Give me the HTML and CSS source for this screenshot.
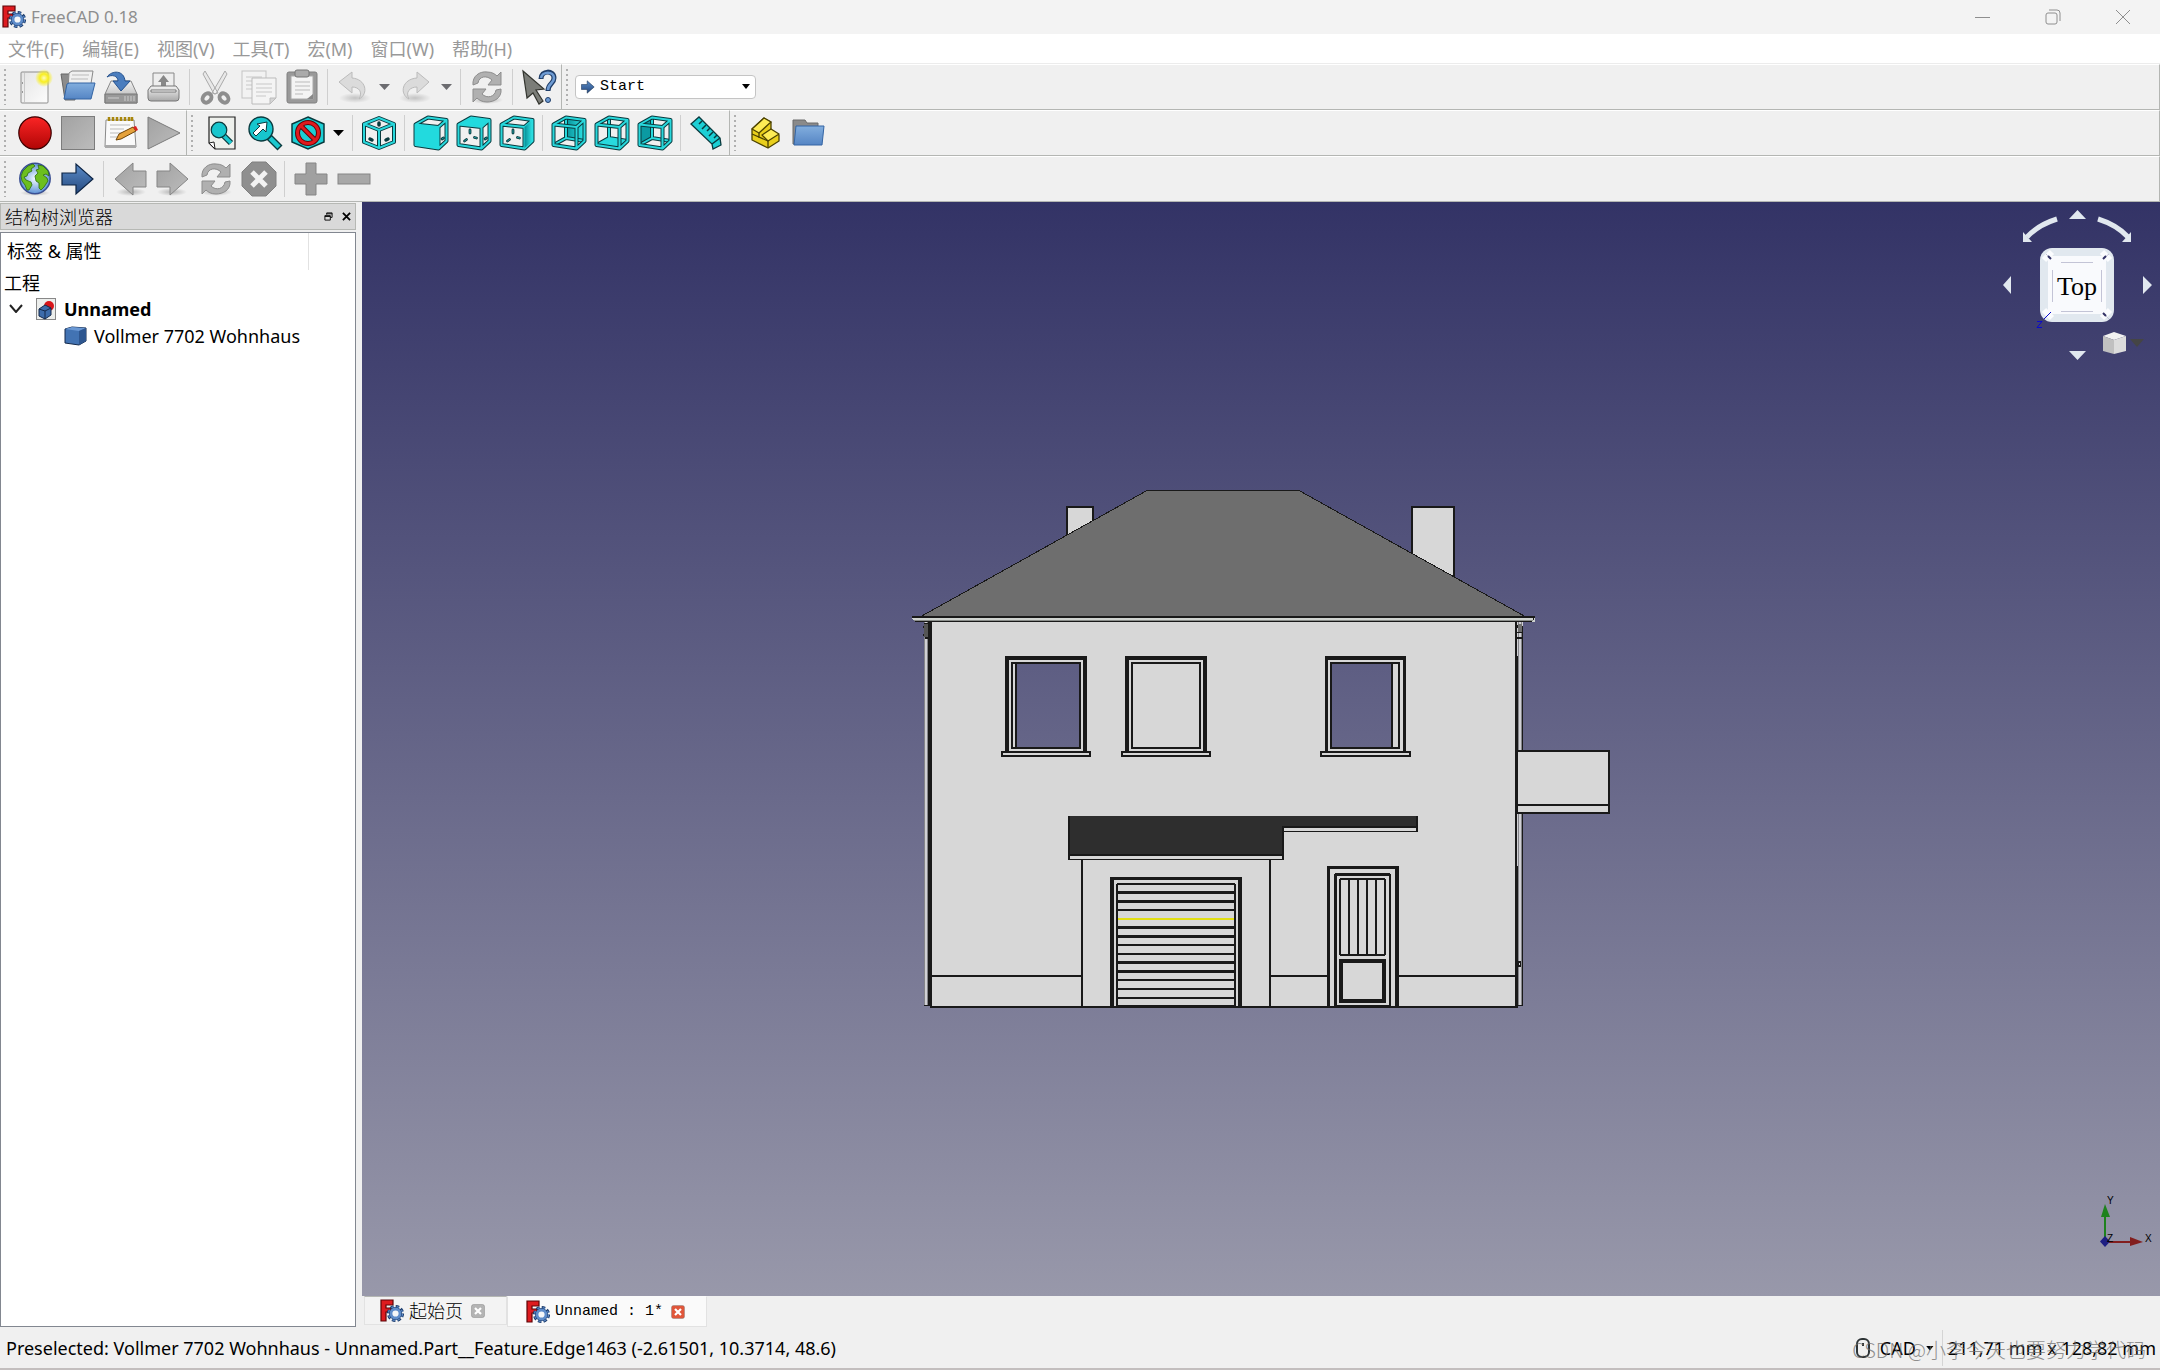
FILE: index.html
```html
<!DOCTYPE html>
<html lang="zh-CN">
<head>
<meta charset="utf-8">
<title>FreeCAD 0.18</title>
<link rel="stylesheet" href="styles.css">
</head>
<body>
<svg class="defs" aria-hidden="true">
  <defs>
    <linearGradient id="paper" x1="0" y1="0" x2="1" y2="1"><stop offset="0" stop-color="#e4e4e4"/><stop offset="1" stop-color="#fcfcfc"/></linearGradient>
    <linearGradient id="metal" x1="0" y1="0" x2="0" y2="1"><stop offset="0" stop-color="#f4f4f4"/><stop offset="1" stop-color="#a8a8a8"/></linearGradient>
    <linearGradient id="gray" x1="0" y1="0" x2="1" y2="1"><stop offset="0" stop-color="#a2a2a2"/><stop offset="1" stop-color="#bcbcbc"/></linearGradient>
    <linearGradient id="blue" x1="0" y1="0" x2="0" y2="1"><stop offset="0" stop-color="#82aede"/><stop offset="1" stop-color="#5585c4"/></linearGradient>
    <linearGradient id="deep" x1="0" y1="0" x2="0" y2="1"><stop offset="0" stop-color="#5b8cc8"/><stop offset="1" stop-color="#25497f"/></linearGradient>
    <linearGradient id="red" x1="0" y1="0" x2="0" y2="1"><stop offset="0" stop-color="#fb2525"/><stop offset="1" stop-color="#b00505"/></linearGradient>
    <linearGradient id="teal" x1="0" y1="0" x2="1" y2="0"><stop offset="0" stop-color="#078f97"/><stop offset="1" stop-color="#2fe3e6"/></linearGradient>
    <radialGradient id="glow"><stop offset="0" stop-color="#fffbc0"/><stop offset=".45" stop-color="#f8ee20"/><stop offset="1" stop-color="#f8ee20" stop-opacity="0"/></radialGradient>
    <radialGradient id="shade"><stop offset="0" stop-color="#000" stop-opacity=".25"/><stop offset="1" stop-color="#000" stop-opacity="0"/></radialGradient>
    <radialGradient id="sea"><stop offset="0" stop-color="#f2faff"/><stop offset="1" stop-color="#5f93d6"/></radialGradient>
    <symbol id="logo" viewBox="0 0 24 24">
      <path d="M1 1H13V6H6V9H11V13H6V22H1Z" fill="#de1b1f" stroke="#5d0508" stroke-width="1.2"/>
      <circle cx="15.5" cy="14.500" r="6.600" fill="none" stroke="#1c3c6c" stroke-width="4" stroke-dasharray="3.200 1.984"/>
      <circle cx="15.500" cy="14.500" r="6.300" fill="none" stroke="#5e8cca" stroke-width="2.600" stroke-dasharray="2.300 2.648" stroke-dashoffset="-.4"/>
      <circle cx="15.500" cy="14.500" r="4.500" fill="#f4f6f8" stroke="#1c3c6c" stroke-width="4"/>
      <circle cx="15.500" cy="14.500" r="4.500" fill="#f4f6f8" stroke="#5e8cca" stroke-width="2.800"/>
    </symbol>
    <path id="frame" d="M1.500 8.500L24.500 11V32.500L1.500 29ZM1.500 8.500L14 1.500L32.500 4L24.500 11M32.500 4V25L24.500 32.500" fill="none" stroke-linejoin="round"/>
    <path id="back" d="M14 1.500V22L1.500 29M14 22L32.500 25" fill="none"/>
    <path id="ticks" d="M13 14V17M7.500 25L9.500 23.500M17.500 21.500L19.500 22M28 23L29.500 22" fill="none" stroke-linecap="round"/>
    <g id="box"><use href="#frame" stroke="#0a3a3e" stroke-width="4"/><use href="#frame" stroke="#28d8dc" stroke-width="2"/></g>
    <g id="rear"><use href="#back" stroke="#0a3a3e" stroke-width="4"/><use href="#back" stroke="#28d8dc" stroke-width="2"/></g>
    <g id="dots"><use href="#ticks" stroke="#0a3a3e" stroke-width="2.800"/><use href="#ticks" stroke="#28b8bc" stroke-width=".8"/></g>
    <symbol id="cycle" viewBox="0 0 34 34">
      <ellipse cx="17" cy="30" rx="16" ry="4" fill="url(#shade)"/>
      <path d="M3 15C2 6 10 1 17 2C22 2 25 4 27 6L31 2V15H18L22 10C17 5 9 6 8 13ZM31 19C32 28 24 32 17 32C12 32 9 30 7 28L3 32V19H16L12 24C17 29 25 27 26 20Z" fill="#b0b0b0" stroke="#8d8d8d"/>
    </symbol>
    <symbol id="gohere" viewBox="0 0 34 34"><path d="M1 11H15V2L32 17L15 32V23H1Z" fill="url(#deep)" stroke="#0d2444" stroke-width="1.200"/></symbol>
    <symbol id="shut" viewBox="0 0 14 14"><rect x=".5" y=".5" width="13" height="13" rx="2" fill="currentColor" stroke="#777" stroke-opacity=".4"/><path d="M4 4L10 10M10 4L4 10" stroke="#fff" stroke-width="2.200"/></symbol>
  </defs>
</svg>

<div class="app">
  <header class="titlebar">
    <svg class="logo"><use href="#logo"/></svg>
    <h1>FreeCAD 0.18</h1>
    <div class="winbtns">
      <button aria-label="最小化"><svg viewBox="0 0 16 16"><path d="M0 8.500H15"/></svg></button>
      <button aria-label="还原"><svg viewBox="0 0 16 16"><rect x="1" y="4" width="11" height="11" rx="2"/><path d="M4 1H12Q15 1 15 4V12"/></svg></button>
      <button aria-label="关闭"><svg viewBox="0 0 16 16"><path d="M1 1L15 15M15 1L1 15"/></svg></button>
    </div>
  </header>

  <nav class="menubar">
    <button>文件(F)</button><button>编辑(E)</button><button>视图(V)</button><button>工具(T)</button><button>宏(M)</button><button>窗口(W)</button><button>帮助(H)</button>
  </nav>

  <div class="toolrow">
    <div class="toolbar">
      <button class="tool" aria-label="新建"><svg viewBox="0 0 34 34"><rect x="3" y="2" width="27" height="31" rx="1" fill="url(#paper)" stroke="#8e8e8e"/><path d="M6.500 3V32" stroke="#c8c8c8"/><path d="M4.500 12V14M4.500 21V23" stroke="#999"/><circle cx="26" cy="8" r="9" fill="url(#glow)"/></svg></button>
      <button class="tool" aria-label="打开"><svg viewBox="0 0 34 34"><path d="M0 4H12L14 7V30H4Z" fill="#8c8c8c" stroke="#666"/><path d="M8 3L11 1H32L29 20H7Z" fill="#f0f0f0" stroke="#888"/><path d="M11 5H28M10 9H27" stroke="#bbb"/><path d="M8 13H34L30 29H3L6 14Z" fill="url(#blue)" stroke="#3465a4"/></svg></button>
      <button class="tool" aria-label="保存"><svg viewBox="0 0 34 34"><path d="M7 11H27L33 24V33H1V24Z" fill="url(#metal)" stroke="#888"/><path d="M1 24H33V33H1Z" fill="#999" stroke="#777"/><path d="M21 26V31M24 26V31M27 26V31M30 26V31M4 28H15" stroke="#ccc"/><path d="M3 7C8 0 20 0 21 11H26L17 21L9 11H14C14 6 8 4 3 7Z" fill="#4a7dbe" stroke="#23508d"/></svg></button>
      <button class="tool" aria-label="打印"><svg viewBox="0 0 34 34"><path d="M6 3H27V20H6Z" fill="#eee" stroke="#888"/><path d="M16.500 5L22 12H19V17H14V12H11Z" fill="#888"/><path d="M4 16H29L32 20V28Q32 31 29 31H4Q1 31 1 28V20Z" fill="url(#metal)" stroke="#777"/><path d="M4 20H29V22H4Z" fill="#fff" stroke="#777"/></svg></button>
      <i class="sep"></i>
      <button class="tool" aria-label="剪切"><svg viewBox="0 0 34 34"><path d="M6 1L19 23L15 24L4 4ZM26 1L13 23L17 24L28 4Z" fill="#e8e8e8" stroke="#aaa"/><g fill="none" stroke="#8e8e8e" stroke-width="4"><ellipse cx="8" cy="28" rx="4" ry="5" transform="rotate(40 8 28)"/><ellipse cx="25" cy="28" rx="4" ry="5" transform="rotate(-40 25 28)"/></g></svg></button>
      <button class="tool faint" aria-label="复制"><svg viewBox="0 0 34 34"><rect x="0" y="1" width="24" height="27" fill="#f3f3f3" stroke="#b5b5b5"/><path d="M4 7H20M4 11H10M4 15H10M4 19H10" stroke="#bbb"/><path d="M10 8H34V28L28 34H10Z" fill="#f6f6f6" stroke="#aaa"/><path d="M14 14H30M14 18H30M14 22H30M14 26H24" stroke="#bbb"/><path d="M34 28H28V34Z" fill="#ccc" stroke="#aaa"/></svg></button>
      <button class="tool" aria-label="粘贴"><svg viewBox="0 0 34 34"><rect x="2" y="2" width="30" height="31" rx="2" fill="#999" stroke="#808080"/><path d="M6 6H28V29H6Z" fill="#f4f4f4" stroke="#aaa"/><rect x="10" y="0" width="14" height="7" rx="2" fill="#aaa" stroke="#777"/><path d="M10 12H25M10 16H25M10 20H25M10 24H18" stroke="#bbb"/><path d="M28 24L22 29H28Z" fill="#888"/></svg></button>
      <i class="sep"></i>
      <button class="tool faint" aria-label="撤销"><svg viewBox="0 0 34 34"><ellipse cx="18" cy="28" rx="16" ry="5" fill="url(#shade)"/><path d="M2 12L15 2V8C29 9 32 24 22 29C26 22 22 17 15 17V23Z" fill="#d4d4d4" stroke="#aaa"/></svg></button>
      <button class="drop dim" aria-label="撤销列表"></button>
      <button class="tool faint" aria-label="重做"><svg viewBox="0 0 34 34"><ellipse cx="16" cy="28" rx="16" ry="5" fill="url(#shade)"/><path d="M30 12L18 2V8C3 9 0 24 10 29C6 22 11 17 18 17V23Z" fill="#d4d4d4" stroke="#aaa"/></svg></button>
      <button class="drop dim" aria-label="重做列表"></button>
      <i class="sep"></i>
      <button class="tool" aria-label="刷新"><svg><use href="#cycle"/></svg></button>
      <i class="sep"></i>
      <button class="tool" aria-label="这是什么"><svg viewBox="0 0 34 34"><path d="M1 1L22 19L14 20L21 31L17 34L11 23L5 28Z" fill="#7b7d78" stroke="#33352f" stroke-width="1.200"/><path d="M19 9C19 0 32 0 32 8C32 14 26 13 26 21" fill="none" stroke="#1f3d68" stroke-width="5"/><path d="M19 8C20 1 32 1 32 8C32 14 26 13 26 20" fill="none" stroke="#6e9bd3" stroke-width="2.600"/><circle cx="26" cy="30" r="2.500" fill="#6e9bd3" stroke="#1f3d68"/></svg></button>
    </div>
    <div class="toolbar last">
      <div class="combo">
        <svg class="comboicon"><use href="#gohere"/></svg>
        <select aria-label="工作台"><option>Start</option></select>
      </div>
    </div>
  </div>

  <div class="toolrow">
    <div class="toolbar">
      <button class="tool" aria-label="录制宏"><svg viewBox="0 0 34 34"><circle cx="17" cy="17" r="16.200" fill="url(#red)" stroke="#3b0000" stroke-width="1.200"/></svg></button>
      <button class="tool" aria-label="停止录制"><svg viewBox="0 0 34 34"><rect x=".5" y=".5" width="33" height="33" fill="url(#gray)" stroke="#7c7c7c"/></svg></button>
      <button class="tool" aria-label="宏管理"><svg viewBox="0 0 34 34"><path d="M2 4H30L32 31H1Z" fill="#fafafa" stroke="#8a8a8a"/><path d="M1 29H32V32H1Z" fill="#aaa"/><path d="M5 1V5M9 1V5M13 1V5M17 1V5M21 1V5M25 1V5M28 1V5" stroke="#a8860c" stroke-width="2.500"/><path d="M6 9H26M6 13H20M6 17H18M6 21H13" stroke="#bbb"/><path d="M12 24L15 18L29 11L32 15L17 23Z" fill="#e5a23c" stroke="#6e4306"/><path d="M29 11L32 10L34 14L32 15Z" fill="#d22"/></svg></button>
      <button class="tool" aria-label="执行宏"><svg viewBox="0 0 34 34"><path d="M1 1L33 17L1 33Z" fill="url(#gray)" stroke="#7c7c7c"/></svg></button>
    </div>
    <div class="toolbar">
      <button class="tool" aria-label="显示全部"><svg viewBox="0 0 34 34"><path d="M4 1H30V33H10L4 27Z" fill="#eef0ec" stroke="#222" stroke-width="1.200"/><path d="M4 27L10 33L9 26Z" fill="#fff" stroke="#222"/><path d="M17 18L26 27" stroke="#0a3a3e" stroke-width="6"/><path d="M18 19L26 27" stroke="#1cc8cf" stroke-width="3.500"/><circle cx="14" cy="14" r="7.800" fill="#17c6cd" stroke="#0a3a3e" stroke-width="1.200"/></svg></button>
      <button class="tool" aria-label="显示选择"><svg viewBox="0 0 34 34"><path d="M21 21L32 32" stroke="#0a3a3e" stroke-width="7"/><path d="M22 22L31 31" stroke="#1cc8cf" stroke-width="4.500"/><circle cx="13" cy="13" r="12" fill="#17c6cd" stroke="#0a3a3e" stroke-width="1.400"/><path d="M19 6L18 16L15 13L8 20L5 17L12 10L9 8Z" fill="#fff" stroke="#0a3a3e"/></svg></button>
      <button class="tool" aria-label="显示样式"><svg viewBox="0 0 34 34"><path d="M17 1L33 8V26L17 33L1 26V8Z" fill="#1ccfd5" stroke="#0a3a3e" stroke-width="1.500"/><circle cx="17" cy="17" r="10.500" fill="none" stroke="#5d0508" stroke-width="5"/><path d="M10 10L24 24" stroke="#5d0508" stroke-width="5"/><circle cx="17" cy="17" r="10.500" fill="none" stroke="#e01a1e" stroke-width="3"/><path d="M10 10L24 24" stroke="#e01a1e" stroke-width="3"/></svg></button>
      <button class="drop" aria-label="显示样式列表"></button>
      <i class="sep"></i>
      <button class="tool" aria-label="轴测图"><svg viewBox="0 0 34 34"><g fill="none" stroke-linejoin="round"><path d="M17 2L32 8V26L17 32L2 26V8ZM2 8L17 14L32 8M17 14V32" stroke="#0a3a3e" stroke-width="4"/><path d="M17 2L32 8V26L17 32L2 26V8ZM2 8L17 14L32 8M17 14V32" stroke="#28d8dc" stroke-width="2"/><path d="M17 7V9M8 23L10 24M24 24L26 23" stroke="#0a3a3e" stroke-width="3.500" stroke-linecap="round"/></g></svg></button>
      <i class="sep"></i>
      <button class="tool" aria-label="前视图"><svg viewBox="0 0 34 34"><use href="#dots"/><use href="#box"/><path d="M1 8.500L25 11V33L1 29Z" fill="#22dade"/></svg></button>
      <button class="tool" aria-label="俯视图"><svg viewBox="0 0 34 34"><use href="#dots"/><use href="#box"/><path d="M2 8.500L14 2L32 4L24.500 10.500Z" fill="#22dade"/></svg></button>
      <button class="tool" aria-label="右视图"><svg viewBox="0 0 34 34"><use href="#dots"/><use href="#box"/><path d="M24.500 11L32.500 4V25L24.500 32Z" fill="url(#teal)"/></svg></button>
      <i class="sep"></i>
      <button class="tool" aria-label="后视图"><svg viewBox="0 0 34 34"><path d="M14 2L32 4V25L14 22Z" fill="url(#teal)"/><use href="#rear"/><use href="#box"/></svg></button>
      <button class="tool" aria-label="底视图"><svg viewBox="0 0 34 34"><use href="#rear"/><path d="M2 29L14 22L32 25L24 32Z" fill="#28dade"/><use href="#box"/></svg></button>
      <button class="tool" aria-label="左视图"><svg viewBox="0 0 34 34"><path d="M2 9L14 2V22L2 29Z" fill="#0b9aa2"/><use href="#rear"/><use href="#box"/></svg></button>
      <i class="sep"></i>
      <button class="tool" aria-label="测量距离"><svg viewBox="0 0 34 34"><path d="M1 8L9 1L30 22L31 29L23 33L22 28Z" fill="#1ccfd5" stroke="#0a3a3e" stroke-width="1.300"/><path d="M22 28L30 22M12 5L9 8M16 9L12 13M20 12L17 15M23 16L19 20M27 19L24 22" stroke="#0a3a3e" stroke-width="1.500"/></svg></button>
    </div>
    <div class="toolbar last">
      <button class="tool" aria-label="创建零件"><svg viewBox="0 0 34 34"><g stroke="#4d4300" stroke-width="1.300" stroke-linejoin="round"><path d="M4 13L16 2L23 6V14L31 19V25L20 32L4 24Z" fill="#e9cf1c"/><path d="M4 13L16 2L23 6L11 17Z" fill="#fdeb55"/><path d="M14 19L23 13L31 18L20 25Z" fill="#fdeb55"/><path d="M11 17V22M4 18L20 25V32" fill="none"/></g></svg></button>
      <button class="tool" aria-label="创建组"><svg viewBox="0 0 34 34"><path d="M2 4H14L16 7H27V28H2Z" fill="#8a8a8a" stroke="#6b6b6b"/><path d="M5 10H33L31 29H3Z" fill="url(#blue)" stroke="#3465a4"/></svg></button>
    </div>
  </div>

  <div class="toolrow">
    <div class="toolbar last">
      <button class="tool" aria-label="打开网站"><svg viewBox="0 0 34 34"><ellipse cx="17" cy="31" rx="15" ry="3" fill="url(#shade)"/><circle cx="17" cy="16.500" r="15.200" fill="url(#sea)" stroke="#3a4f92" stroke-width="1.500"/><path d="M3 14L5 9L10 4L15 2L17 4L13 7L14 9L10 11L9 14L6 15L8 18L13 20L14 23L11 28L9 28L7 23L4 19ZM20 3L25 4L30 9L31 14L28 12L25 13L29 16L30 19L26 25L23 28L21 26L21 21L18 19L17 14L20 11L18 8L21 7Z" fill="#6cbf1e" stroke="#2e6d0d" stroke-width=".8"/></svg></button>
      <button class="tool" aria-label="转到"><svg><use href="#gohere"/></svg></button>
      <i class="sep"></i>
      <button class="tool" aria-label="后退"><svg viewBox="0 0 34 34"><ellipse cx="18" cy="30" rx="15" ry="4" fill="url(#shade)"/><path d="M2 17L20 1V9H33V25H20V33Z" fill="url(#gray)" stroke="#858585"/></svg></button>
      <button class="tool" aria-label="前进"><svg viewBox="0 0 34 34"><ellipse cx="16" cy="30" rx="15" ry="4" fill="url(#shade)"/><path d="M32 17L14 1V9H1V25H14V33Z" fill="url(#gray)" stroke="#858585"/></svg></button>
      <button class="tool" aria-label="重新载入"><svg><use href="#cycle"/></svg></button>
      <button class="tool" aria-label="停止"><svg viewBox="0 0 34 34"><path d="M10 0H24L34 10V24L24 34H10L0 24V10Z" fill="#8f8f8f" stroke="#808080"/><path d="M10 10L24 24M24 10L10 24" stroke="#f2f2f2" stroke-width="5"/></svg></button>
      <i class="sep"></i>
      <button class="tool" aria-label="放大"><svg viewBox="0 0 34 34"><path d="M12 1H22V12H33V22H22V33H12V22H1V12H12Z" fill="#a0a0a0" stroke="#858585"/></svg></button>
      <button class="tool" aria-label="缩小"><svg viewBox="0 0 34 34"><rect x="1" y="12" width="32" height="10" fill="#a8a8a8" stroke="#858585"/></svg></button>
    </div>
  </div>

  <main class="workspace">
    <aside class="dock">
      <div class="docktitle">
        <h2>结构树浏览器</h2>
        <button aria-label="浮动"><svg viewBox="0 0 10 10"><path d="M3 3V1H9V6H7M1 4H7V9H1ZM1 5H7M3 2H9"/></svg></button>
        <button aria-label="关闭"><svg viewBox="0 0 10 10"><path d="M1 1L9 9M9 1L1 9"/></svg></button>
      </div>
      <div class="tree">
        <div class="treehead"><span>标签 &amp; 属性</span></div>
        <div class="row root">工程</div>
        <div class="row doc">
          <svg class="chev" viewBox="0 0 14 9"><path d="M1 1L7 8L13 1"/></svg>
          <svg class="docicon" viewBox="0 0 20 22"><rect x=".5" y=".5" width="19" height="21" fill="#eceeec" stroke="#888"/><circle cx="13" cy="8" r="5" fill="#d8161a"/><path d="M3 11L9 7L15 10V17L9 21L3 18Z" fill="#3d6cab" stroke="#14294a"/><path d="M3 11L9 13L15 10M9 13V21" fill="none" stroke="#14294a"/></svg>
          <span>Unnamed</span>
        </div>
        <div class="row part">
          <svg class="particon" viewBox="0 0 24 20"><path d="M1 3L8 1L22 2V15L15 19L1 17Z" fill="#4273b3" stroke="#14294a"/><path d="M1 3L15 5L22 2L8 1Z" fill="#6a98d4"/><path d="M15 5L22 2V15L15 19Z" fill="#2e568f"/></svg>
          <span>Vollmer 7702 Wohnhaus</span>
        </div>
      </div>
    </aside>

    <section class="view">
      <div class="canvas">
        <svg class="model" viewBox="362 202 1798 1094" shape-rendering="crispEdges">
          <g fill="#d7d7d7" stroke="#191919" stroke-width="2"><rect x="1067" y="507" width="26" height="60"/><rect x="1412" y="507" width="42" height="90"/></g>
          <path d="M920 617L1147 490.500H1299L1526 617Z" fill="#6e6e6e" stroke="#191919"/>
          <!-- downpipes -->
          <path d="M924 622H928V1006H924ZM1517 622H1523V1006H1517Z" fill="#d0d0d4"/>
          <path d="M924 622H925V1006H924ZM927 622H928V1006H927ZM1518 622H1519V1006H1518ZM1521 622H1522V1006H1521Z" fill="#85858a"/>
          <path d="M924 624H928V637H924Z" fill="#555"/>
          <path d="M1518 624H1522V633H1518Z" fill="#6e6e6e"/>
          <path d="M924 623H930V624H924ZM923 626H924V628H923ZM925 637H928V639H925ZM923 634H924V636H923ZM924 1005H930V1006H924ZM1517 625H1518V628H1517ZM1522 626H1523V1006H1522ZM1517 632H1523V633H1517ZM1517 637H1523V639H1517ZM1517 656H1518V750H1517ZM1517 866H1518V1006H1517ZM1517 1005H1523V1006H1517Z" fill="#191919"/>
          <path d="M1518 961H1521V967H1518Z" fill="#191919"/><path d="M1519 963H1520V965H1519Z" fill="#d7d7d7"/>
          <!-- wall with two see-through windows -->
          <path fill-rule="evenodd" d="M930 620H1517V1007H930ZM1017 664H1079V747H1017ZM1332 664H1391V747H1332Z" fill="#d7d7d7"/>
          <path d="M928 622H932V1006H928ZM1515 622H1517V1008H1515ZM930 1006H1518V1008H930Z" fill="#191919"/>
          <!-- eaves -->
          <path d="M912 616H1535V622H915L912 619Z" fill="#cfd3cf"/><path d="M914 620H1533V621H914Z" fill="#8a8d8a"/>
          <path d="M912 616H1535V618H912ZM915 621H1532V622H915ZM1533 618H1534V620H1533Z" fill="#191919"/>
          <!-- balcony -->
          <path d="M1517 751H1609V813H1517ZM1517 805H1609" fill="#d7d7d7" stroke="#191919" stroke-width="2"/>
          <!-- windows -->
          <g fill="#191919">
            <path id="w1" d="M1005 656H1087V660H1005ZM1005 656H1009V751H1005ZM1083 656H1087V751H1083ZM1011 662H1081V664H1011ZM1011 662H1013V749H1011ZM1079 662H1081V749H1079ZM1011 747H1081V749H1011ZM1001 751H1091V753H1001ZM1001 755H1091V757H1001ZM1001 751H1003V757H1001ZM1089 751H1091V757H1089Z"/>
            <use href="#w1" x="120"/>
            <path d="M1015 662H1017V749H1015Z"/>
            <path d="M1325 656H1406V660H1325ZM1325 656H1328V751H1325ZM1403 656H1406V751H1403ZM1330 662H1400V664H1330ZM1330 662H1332V749H1330ZM1398 662H1400V749H1398ZM1330 747H1400V749H1330ZM1391 662H1393V749H1391ZM1320 751H1411V753H1320ZM1320 755H1411V757H1320ZM1320 751H1322V757H1320ZM1409 751H1411V757H1409Z"/>
          </g>
          <!-- canopy -->
          <path d="M1068 816H1418V826H1284V854H1068Z" fill="#2e2e2e"/>
          <path d="M1068 816H1070V860H1068ZM1068 854H1284V856H1068ZM1068 859H1284V860H1068ZM1282 826H1284V860H1282ZM1282 826H1418V828H1282ZM1282 831H1418V832H1282ZM1416 816H1418V832H1416Z" fill="#191919"/>
          <!-- garage walls and plinth -->
          <path d="M1081 860H1083V1006H1081ZM1269 860H1271V1006H1269ZM932 975H1081V977H932ZM1271 975H1327V977H1271ZM1399 975H1515V977H1399Z" fill="#191919"/>
          <!-- garage door -->
          <path d="M1110 877H1242V880H1110ZM1110 877H1114V1006H1110ZM1238 877H1242V1006H1238ZM1116 884H1118V1006H1116ZM1234 884H1236V1006H1234ZM1117 883H1235V885H1117ZM1118 891H1234V894H1118ZM1118 900H1234V903H1118ZM1118 909H1234V911H1118ZM1118 926H1234V929H1118ZM1118 935H1234V938H1118ZM1118 944H1234V946H1118ZM1118 953H1234V955H1118ZM1118 961H1234V964H1118ZM1118 970H1234V973H1118ZM1118 979H1234V981H1118ZM1118 988H1234V990H1118ZM1118 997H1234V999H1118ZM1118 1005H1234V1007H1118Z" fill="#191919"/>
          <path d="M1118 918H1234V920H1118Z" fill="#e2df12"/>
          <!-- front door -->
          <path d="M1327 866H1399V869H1327ZM1327 866H1330V1006H1327ZM1395 866H1399V1006H1395ZM1335 873H1390V876H1335ZM1334 874H1337V1006H1334ZM1389 874H1391V1006H1389ZM1334 1005H1391V1007H1334ZM1340 878H1385V880H1340ZM1340 954H1385V956H1340ZM1339 879H1341V955H1339ZM1384 879H1386V955H1384ZM1348 880H1350V954H1348ZM1357 880H1359V954H1357ZM1366 880H1368V954H1366ZM1375 880H1377V954H1375Z" fill="#191919"/>
          <rect x="1341" y="961" width="43" height="40" fill="none" stroke="#191919" stroke-width="4"/>
        </svg>
        <svg class="navcube" viewBox="2000 202 160 168">
          <g fill="#e1e8ef"><path d="M2069 219H2086L2077.500 210ZM2003 285L2011 276V294ZM2152 285L2143 276V294ZM2069 351H2086L2077.500 360ZM2023 242V232L2032 242ZM2131 242V232L2122 242Z"/><rect x="2040" y="248" width="74" height="74" rx="12"/></g>
          <path d="M2057 219Q2038 225 2027 237M2098 219Q2117 225 2128 237" fill="none" stroke="#e1e8ef" stroke-width="5"/>
          <path d="M2052 252L2044 260M2102 252L2110 260M2044 310L2052 318M2110 310L2102 318" stroke="#fbfcfe" stroke-width="6"/>
          <rect x="2048" y="256" width="58" height="58" rx="4" fill="#f9fafd"/>
          <path d="M2061 262.500H2093M2061 311.500H2093M2052.500 270V302M2101.500 270V302M2046 254L2050 258M2109 254L2104 258M2109 319L2104 314" fill="none" stroke="#c3c4d6"/>
          <path d="M2048 256L2051 259M2106 256L2103 259M2106 316L2103 313" stroke="#333366" stroke-width="2"/>
          <path d="M2044 319L2051 312M2037 321.500H2042L2037 327.500H2042" fill="none" stroke="#0a0acc"/>
          <text class="face" x="2077" y="295" text-anchor="middle">Top</text>
          <path d="M2103 336L2114 332L2126 336L2114 340Z" fill="#f2f2f2"/><path d="M2103 336L2114 340V354L2103 351Z" fill="#c0c0c0"/><path d="M2126 336L2114 340V354L2126 351Z" fill="#dcdcdc"/>
          <path d="M2130 339H2144L2137 347Z" fill="#454545"/>
        </svg>
        <svg class="axes" viewBox="2090 1190 70 64">
          <path d="M2105 1241V1216" stroke="#1e821e" stroke-width="2"/><path d="M2105 1204L2110 1217H2101Z" fill="#1e821e"/>
          <path d="M2105 1242H2131" stroke="#821e1e" stroke-width="2"/><path d="M2143 1242L2130 1237V1246Z" fill="#821e1e"/>
          <path d="M2105 1236L2110 1241.500L2105 1247L2100 1241.500Z" fill="#1e1e82"/>
          <text x="2107" y="1204">Y</text><text x="2145" y="1242">X</text><text x="2107" y="1242">Z</text>
        </svg>
      </div>
      <div class="tabs">
        <div class="tab"><svg class="logo"><use href="#logo"/></svg><span>起始页</span><button aria-label="关闭起始页"><svg><use href="#shut"/></svg></button></div>
        <div class="tab active"><svg class="logo"><use href="#logo"/></svg><span>Unnamed : 1*</span><button aria-label="关闭 Unnamed"><svg><use href="#shut"/></svg></button></div>
      </div>
    </section>
  </main>

  <footer class="status">
    <span class="message">Preselected: Vollmer 7702 Wohnhaus - Unnamed.Part__Feature.Edge1463 (-2.61501, 10.3714, 48.6)</span>
    <button class="navstyle"><svg class="mouse" viewBox="0 0 14 20"><rect x="1" y="1" width="12" height="18" rx="5"/><path d="M7 5V8"/></svg>CAD<i class="caret"></i></button>
    <span class="size">211,71 mm x 128,82 mm</span>
    <span class="watermark">CSDN @小李今天也要努力学代码</span>
  </footer>
</div>
</body>
</html>
```
FILE: styles.css
```css
* { box-sizing: border-box; }

body {
  margin: 0;
  background: #f0f0f0;
  color: #000;
  font: 18px/26px "Noto Sans", "Noto Sans CJK SC", sans-serif;
}

button {
  margin: 0;
  padding: 0;
  border: 0;
  background: none;
  color: inherit;
  font: inherit;
}

h1, h2 { margin: 0; font: inherit; }

.defs { position: absolute; width: 0; height: 0; }

.app {
  display: flex;
  flex-direction: column;
  min-height: 100vh;
}

/* Title and menu */
.titlebar {
  display: flex;
  align-items: center;
  gap: 5px;
  height: 34px;
  padding: 0 2px;
  background: #f3f3f3;
  color: #8e8e8e;
  font-size: 17px;
}
.logo { width: 24px; height: 24px; flex: none; }
.winbtns { display: flex; margin-left: auto; }
.winbtns button { display: grid; place-items: center; width: 70px; height: 34px; }
.winbtns svg { width: 16px; height: 16px; fill: none; stroke: #8e8e8e; stroke-width: 1; }

.menubar {
  display: flex;
  gap: 18px;
  height: 30px;
  padding-left: 8px;
  background: #fff;
  border-bottom: 1px solid #ececec;
  color: #999;
}

/* Toolbars */
.toolrow { display: flex; height: 46px; }
.toolbar {
  position: relative;
  display: flex;
  align-items: center;
  padding: 0 1px 0 13px;
  border-top: 1px solid #fff;
  border-right: 1px solid #b4b6b3;
  border-bottom: 1px solid #b4b6b3;
}
.toolbar.last { flex: 1; }
.toolbar::before {
  content: "";
  position: absolute;
  left: 4px;
  top: 4px;
  bottom: 4px;
  width: 2px;
  background: repeating-linear-gradient(#b0b0b0 0 2px, transparent 2px 5px);
}
.tool { display: grid; place-items: center; width: 43px; height: 43px; }
.tool svg { width: 34px; height: 34px; overflow: visible; }
.faint { opacity: .75; }
.sep { width: 9px; height: 36px; border-left: 1px solid #cfcfcf; margin-left: 4px; margin-right: -4px; }
.drop { width: 19px; height: 43px; padding-left: 4px; }
.drop::before, .caret {
  content: "";
  display: block;
  width: 11px;
  height: 6px;
  background: #000;
  clip-path: polygon(0 0, 100% 0, 50% 100%);
}
.drop.dim::before { background: #6c6c70; }

.combo { position: relative; width: 181px; }
.combo::after {
  content: "";
  position: absolute;
  right: 6px;
  top: 9px;
  width: 8px;
  height: 5px;
  background: #000;
  clip-path: polygon(0 0, 100% 0, 50% 100%);
}
.comboicon { position: absolute; left: 6px; top: 5px; width: 14px; height: 14px; }
.combo select {
  display: block;
  width: 100%;
  height: 24px;
  padding: 0 24px;
  appearance: none;
  background: #fff;
  border: 1px solid #c4c4c4;
  border-radius: 4px;
  color: #000;
  font: 15px/22px "Liberation Mono", monospace;
}

/* Work area */
.workspace { display: flex; flex: 1; gap: 6px; }
.dock { display: flex; flex-direction: column; gap: 2px; width: 356px; padding: 1px 0; flex: none; }
.docktitle {
  display: flex;
  align-items: center;
  gap: 8px;
  height: 27px;
  padding: 0 4px;
  background: #d9d9d9;
  border: 1px solid #b6b8b4;
}
.docktitle h2 { flex: 1; font-weight: 300; }
.docktitle button { display: grid; place-items: center; width: 10px; }
.docktitle svg { width: 9px; height: 9px; fill: none; stroke: #000; stroke-width: 2; }
.docktitle button:first-of-type svg { stroke-width: 1; }
.tree { flex: 1; background: #fff; border: 1px solid #828790; }
.treehead {
  width: 308px;
  height: 37px;
  padding-left: 6px;
  border-right: 1px solid #e2e2e2;
  line-height: 37px;
}
.row { display: flex; align-items: center; height: 27px; }
.root { padding-left: 3px; height: 25px; }
.doc { gap: 8px; padding-left: 8px; font-weight: 700; }
.part { gap: 6px; padding-left: 63px; }
.chev { width: 14px; height: 9px; margin-right: 5px; fill: none; stroke: #222; stroke-width: 2; }
.docicon { width: 20px; height: 22px; }
.particon { width: 24px; height: 20px; }

.view { display: flex; flex: 1; flex-direction: column; min-width: 0; }
.canvas {
  position: relative;
  flex: 1;
  overflow: hidden;
  background: linear-gradient(#333366, #9898aa);
}
.model { position: absolute; inset: 0; width: 100%; height: 100%; }
.navcube { position: absolute; top: 0; right: 0; width: 160px; height: 168px; }
.face { font: 26px "Liberation Serif", serif; }
.axes { position: absolute; right: 0; bottom: 42px; width: 70px; height: 64px; font: 10px "Liberation Sans", sans-serif; }

.tabs { display: flex; align-items: flex-start; height: 32px; padding-left: 2px; }
.tab {
  display: flex;
  align-items: center;
  gap: 5px;
  height: 29px;
  padding: 0 21px 0 15px;
  background: #f3f3f3;
  border: 1px solid #e2e2e2;
  border-top-color: #b4b6b3;
  font-weight: 300;
}
.tab button { width: 14px; height: 14px; margin-left: 3px; color: #b4b4b4; }
.tab button svg { display: block; width: 14px; height: 14px; }
.tab.active {
  height: 31px;
  padding-left: 18px;
  background: #fafafa;
  border-top-color: #fafafa;
  font: 15px/26px "Liberation Mono", monospace;
}
.tab.active button { color: #e0563a; }

/* Status bar */
.status {
  position: relative;
  display: flex;
  align-items: center;
  height: 42px;
  padding: 0 4px 0 6px;
  border-bottom: 2px solid #c3bebe;
  white-space: nowrap;
}
.message { flex: 1; }
.navstyle { display: flex; align-items: center; gap: 10px; height: 36px; padding-right: 8px; border-right: 1px solid #d4d4d4; }
.navstyle .caret { width: 8px; height: 5px; }
.mouse { width: 14px; height: 20px; fill: none; stroke: #2e3436; stroke-width: 2; }
.size { padding-left: 5px; }
.watermark {
  position: absolute;
  right: 14px;
  top: 9px;
  color: rgba(110, 110, 110, .75);
  font: 300 20px/26px "Noto Sans CJK SC", sans-serif;
}
```
